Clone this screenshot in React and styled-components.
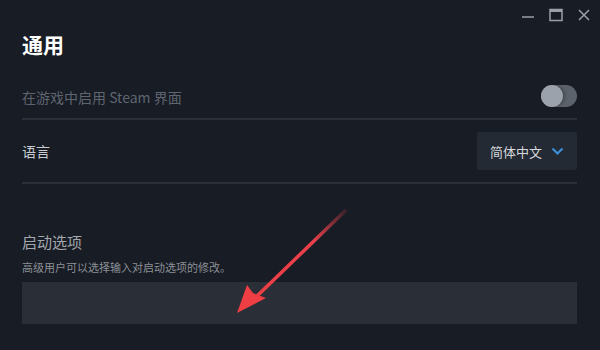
import React from 'react';
import styled, { createGlobalStyle } from 'styled-components';

const GlobalStyle = createGlobalStyle`
  html, body { margin: 0; padding: 0; background: #181c24; }
  body { font-family: "Noto Sans CJK SC", "Noto Sans", sans-serif; }
`;

const Window = styled.div`
  position: relative;
  width: 600px;
  height: 350px;
  background: #181c24;
  overflow: hidden;
  padding: 0 23px 0 22px;
  box-sizing: border-box;
`;

const TitleBar = styled.div`
  display: flex;
  justify-content: flex-end;
  align-items: center;
  gap: 14px;
  height: 30px;
  margin-right: -14px;
`;

const WinButton = styled.div`
  width: 14px;
  height: 14px;
  display: flex;
  align-items: center;
  justify-content: center;
  color: #9ba0a8;
`;

const Title = styled.h1`
  margin: 0;
  font-size: 21px;
  font-weight: 700;
  color: #ffffff;
  line-height: 28px;
  height: 46px;
`;

const Row = styled.div`
  display: flex;
  align-items: center;
  justify-content: space-between;
  height: ${(p) => p.h}px;
  border-bottom: 2px solid #2a303a;
  box-sizing: border-box;
`;

const Label = styled.span`
  font-size: 14px;
  color: ${(p) => (p.dim ? '#5e6571' : '#c9cdd3')};
`;

const Toggle = styled.div`
  width: 36px;
  height: 22px;
  border-radius: 11px;
  background: #5c626b;
  position: relative;
  margin-bottom: 2px;
  &::after {
    content: '';
    position: absolute;
    left: 0;
    top: 0;
    width: 22px;
    height: 22px;
    border-radius: 50%;
    background: #9ca2ab;
    box-shadow: 2px 0 3px rgba(0, 0, 0, 0.25);
  }
`;

const Select = styled.div`
  width: 100px;
  height: 38px;
  background: #242a33;
  border-radius: 2px;
  display: flex;
  align-items: center;
  justify-content: center;
  gap: 9px;
  font-size: 13px;
  color: #d6d9dd;
`;

const Section = styled.div`
  padding-top: 47px;
  display: flex;
  flex-direction: column;
`;

const SectionTitle = styled.div`
  font-size: 15px;
  color: #a3a8ae;
  line-height: 22px;
`;

const Hint = styled.div`
  font-size: 11px;
  color: #8b9097;
  margin-top: 6px;
  line-height: 16px;
`;

const Input = styled.div`
  margin-top: 7px;
  height: 42px;
  background: #2a2e36;
`;

const Arrow = styled.svg`
  position: absolute;
  left: 0;
  top: 0;
  pointer-events: none;
`;

export default function App() {
  return (
    <Window>
      <GlobalStyle />
      <TitleBar>
        <WinButton>
          <svg width="14" height="14" viewBox="0 0 14 14">
            <line x1="1" y1="9" x2="13" y2="9" stroke="currentColor" strokeWidth="1.5" />
          </svg>
        </WinButton>
        <WinButton>
          <svg width="14" height="14" viewBox="0 0 14 14">
            <rect x="1" y="1.5" width="12" height="11" fill="none" stroke="currentColor" strokeWidth="1.5" />
            <line x1="1" y1="3" x2="13" y2="3" stroke="currentColor" strokeWidth="2" />
          </svg>
        </WinButton>
        <WinButton>
          <svg width="14" height="14" viewBox="0 0 14 14">
            <path d="M2 2 L12 12 M12 2 L2 12" stroke="currentColor" strokeWidth="1.5" />
          </svg>
        </WinButton>
      </TitleBar>
      <Title>通用</Title>
      <Row h={44}>
        <Label dim>在游戏中启用 Steam 界面</Label>
        <Toggle />
      </Row>
      <Row h={64}>
        <Label>语言</Label>
        <Select>
          简体中文
          <svg width="13" height="9" viewBox="0 0 13 9">
            <path d="M1.5 1.5 L6.5 6.5 L11.5 1.5" fill="none" stroke="#3b8fd9" strokeWidth="2.2" />
          </svg>
        </Select>
      </Row>
      <Section>
        <SectionTitle>启动选项</SectionTitle>
        <Hint>高级用户可以选择输入对启动选项的修改。</Hint>
        <Input />
      </Section>
      <Arrow width="600" height="350" viewBox="0 0 600 350">
        <defs>
          <linearGradient id="ag" x1="345" y1="212" x2="240" y2="310" gradientUnits="userSpaceOnUse">
            <stop offset="0" stopColor="#e8404a" stopOpacity="0.2" />
            <stop offset="0.3" stopColor="#e8404a" />
            <stop offset="1" stopColor="#ef3e44" />
          </linearGradient>
        </defs>
        <path d="M345 211 L255 298" stroke="url(#ag)" strokeWidth="3.5" strokeLinecap="round" />
        <path d="M237 313 L247 285 L253 293 L266 298 Z" fill="#ef3e44" />
      </Arrow>
    </Window>
  );
}
